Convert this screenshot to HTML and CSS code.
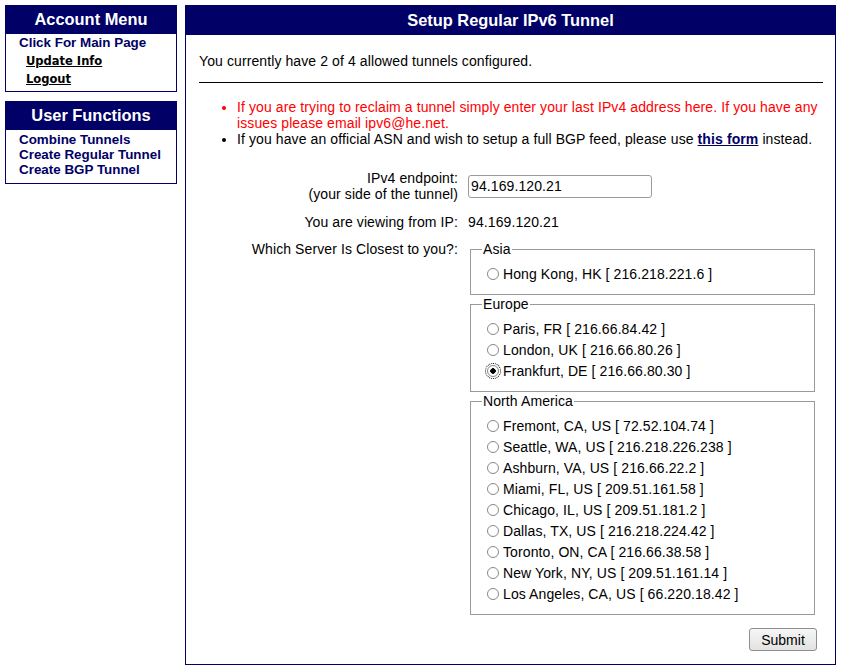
FILE: index.html
```html
<!DOCTYPE html>
<html lang="en">
<head>
    <meta charset="utf-8">
    <title>Setup Regular IPv6 Tunnel</title>
    <link rel="stylesheet" href="styles.css">
</head>

<body>

    <div class="page">
        <div class="sidebar">
            <div class="menu-box">
                <div class="menu-title">Account Menu</div>
                <div class="menu-body account">
                    <a href="#" class="menu-link">Click For Main Page</a>
                    <a href="#" class="sub-link">Update Info</a>
                    <a href="#" class="sub-link">Logout</a>
                </div>
            </div>

            <div class="menu-box">
                <div class="menu-title">User Functions</div>
                <div class="menu-body functions">
                    <a href="#" class="menu-link">Combine Tunnels</a>
                    <a href="#" class="menu-link">Create Regular Tunnel</a>
                    <a href="#" class="menu-link">Create BGP Tunnel</a>
                </div>
            </div>
        </div>

        <div class="main-box">
            <div class="main-title">Setup Regular IPv6 Tunnel</div>
            <div class="main-body">
                <p class="intro">You currently have 2 of 4 allowed tunnels configured.</p>
                <hr class="rule">

                <ul class="notes">
                    <li class="warn">If you are trying to reclaim a tunnel simply enter your last IPv4 address here. If you have any issues please email ipv6@he.net.</li>
                    <li>If you have an official ASN and wish to setup a full BGP feed, please use <a href="#" class="form-link">this form</a> instead.</li>
                </ul>

                <form class="tunnel-form" onsubmit="return false;">
                    <label class="field-label middle" for="ipv4">IPv4 endpoint:<br>(your side of the tunnel)</label>
                    <div class="field-value middle">
                        <input type="text" id="ipv4" class="ip-input" value="94.169.120.21">
                    </div>

                    <div class="field-label spaced">You are viewing from IP:</div>
                    <div class="field-value spaced">94.169.120.21</div>

                    <div class="field-label">Which Server Is Closest to you?:</div>
                    <div class="field-value">
                        <fieldset class="region">
                            <legend>Asia</legend>
                            <label class="server"><input type="radio" name="tserv" class="radio">Hong Kong, HK [ 216.218.221.6 ]</label>
                        </fieldset>

                        <fieldset class="region">
                            <legend>Europe</legend>
                            <label class="server"><input type="radio" name="tserv" class="radio">Paris, FR [ 216.66.84.42 ]</label>
                            <label class="server"><input type="radio" name="tserv" class="radio">London, UK [ 216.66.80.26 ]</label>
                            <label class="server"><input type="radio" name="tserv" class="radio focused" checked>Frankfurt, DE [ 216.66.80.30 ]</label>
                        </fieldset>

                        <fieldset class="region">
                            <legend>North America</legend>
                            <label class="server"><input type="radio" name="tserv" class="radio">Fremont, CA, US [ 72.52.104.74 ]</label>
                            <label class="server"><input type="radio" name="tserv" class="radio">Seattle, WA, US [ 216.218.226.238 ]</label>
                            <label class="server"><input type="radio" name="tserv" class="radio">Ashburn, VA, US [ 216.66.22.2 ]</label>
                            <label class="server"><input type="radio" name="tserv" class="radio">Miami, FL, US [ 209.51.161.58 ]</label>
                            <label class="server"><input type="radio" name="tserv" class="radio">Chicago, IL, US [ 209.51.181.2 ]</label>
                            <label class="server"><input type="radio" name="tserv" class="radio">Dallas, TX, US [ 216.218.224.42 ]</label>
                            <label class="server"><input type="radio" name="tserv" class="radio">Toronto, ON, CA [ 216.66.38.58 ]</label>
                            <label class="server"><input type="radio" name="tserv" class="radio">New York, NY, US [ 209.51.161.14 ]</label>
                            <label class="server"><input type="radio" name="tserv" class="radio">Los Angeles, CA, US [ 66.220.18.42 ]</label>
                        </fieldset>
                    </div>

                    <div class="submit-row">
                        <button type="submit" class="submit-button">Submit</button>
                    </div>
                </form>
            </div>
        </div>
    </div>

</body>
</html>
```

FILE: styles.css
```css
body {
    font-family: 'Liberation Sans', Arial, sans-serif;
    font-size: 13px;
    color: #000;
    background-color: #fff;
    margin: 5px;
}

.page {
    display: flex;
    align-items: flex-start;
    gap: 8px;
}

/* left menus */

.sidebar {
    width: 172px;
    flex: none;
}

.menu-box {
    border: 1px solid #000066;
    margin-bottom: 9px;
}

.menu-title {
    background-color: #000066;
    color: #fff;
    font-weight: bold;
    font-size: 16.4px;
    text-align: center;
    height: 28px;
    line-height: 27px;
}

.menu-body {
    padding-left: 13px;
}

.menu-body a {
    display: block;
}

.account {
    padding-bottom: 3px;
}

.account a {
    line-height: 18px;
}

.functions {
    padding-top: 2px;
    padding-bottom: 6px;
}

.functions a {
    line-height: 15px;
}

.menu-link {
    color: #000066;
    font-weight: bold;
    font-size: 13.4px;
    text-decoration: none;
}

.sub-link {
    color: #000;
    font-family: 'DejaVu Sans', Verdana, sans-serif;
    font-weight: bold;
    font-size: 11.5px;
    text-decoration: underline;
    margin-left: 7px;
}

/* main panel */

.main-box {
    flex: 1;
    border: 1px solid #000066;
}

.main-title {
    background-color: #000066;
    color: #fff;
    font-weight: bold;
    font-size: 16.4px;
    text-align: center;
    height: 29px;
    line-height: 29px;
}

.main-body {
    padding: 18px 12px 13px 13px;
    font-size: 14px;
    letter-spacing: 0.1px;
}

.intro {
    margin: 0;
    line-height: 16px;
}

.rule {
    border: none;
    border-top: 1px solid #000;
    margin: 13px 0 0 0;
}

.notes {
    margin: 16px 0 0 0;
    padding-left: 38px;
    line-height: 16px;
}

.warn {
    color: #ff0000;
}

.form-link {
    color: #000066;
    font-weight: bold;
}

.tunnel-form {
    display: grid;
    grid-template-columns: 259px 347px;
    column-gap: 10px;
    row-gap: 11px;
    margin-top: 23px;
    line-height: 16px;
}

.field-label {
    text-align: right;
}

.middle {
    align-self: center;
}

.spaced {
    padding-top: 1px;
}

.ip-input {
    width: 184px;
    height: 23px;
    box-sizing: border-box;
    border: 1px solid #9a9a9a;
    border-radius: 3px;
    padding: 1px 2px;
    font-family: 'Liberation Sans', Arial, sans-serif;
    font-size: 14px;
    letter-spacing: 0.1px;
    color: #000;
}

.region {
    border: 1px solid #999;
    margin: 0 0 1px 2px;
    padding: 6px 10px 10px 16px;
}

.region legend {
    padding: 0 1px;
    margin-left: -5px;
    line-height: 16px;
}

.server {
    display: flex;
    align-items: center;
    height: 21px;
}

.radio {
    appearance: none;
    width: 12px;
    height: 12px;
    margin: 0 4px 0 0;
    border: 1px solid #888;
    border-radius: 50%;
    background-color: #fff;
    flex: none;
}

.radio:checked {
    background-image: radial-gradient(circle, #000 0, #000 2.5px, #fff 3px);
}

.radio.focused {
    outline: 1px dotted #000;
    outline-offset: 1px;
}

.submit-row {
    grid-column: 1 / 3;
    text-align: right;
    margin-right: -2px;
    margin-top: 1px;
}

.submit-button {
    width: 68px;
    height: 23px;
    font-family: 'Liberation Sans', Arial, sans-serif;
    font-size: 14px;
    color: #000;
    background: linear-gradient(#f6f6f6, #e2e2e2);
    border: 1px solid #8e8e8e;
    border-radius: 3px;
    cursor: pointer;
}
```
